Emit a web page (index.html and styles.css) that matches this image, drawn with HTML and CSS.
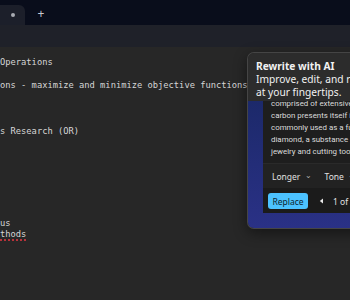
FILE: index.html
```html
<!DOCTYPE html>
<html lang="en">
<head>
  <meta charset="UTF-8" />
  <title>Notepad - Rewrite</title>
  <link rel="stylesheet" href="styles.css">
</head>
<body>
  <header class="tabbar">
    <div class="tab"><span class="dot"></span></div>
    <div class="newtab">+</div>
  </header>
  <div class="toolbar"></div>

  <main class="editor">
    <pre class="lines">Operations

ons - maximize and minimize objective functions



s Research (OR)







us
<span class="misspelled">thods</span></pre>

    <!-- rewrite popup sits over the text -->
    <div class="popup">
      <div class="popup-head">
        <div class="popup-title">Rewrite with AI</div>
        <div class="popup-desc">Improve, edit, and rewrite text<br>at your fingertips.</div>
      </div>
      <div class="popup-body">
        <div class="card">
          <div class="card-text">
            <p>comprised of extensive chains,</p>
            <p>carbon presents itself in a variety</p>
            <p>commonly used as a fuel source,</p>
            <p>diamond, a substance renowned for</p>
            <p>jewelry and cutting tools.</p>
          </div>
          <div class="options">
            <span class="opt">Longer <span class="chev">&#8964;</span></span>
            <span class="opt">Tone <span class="chev">&#8964;</span></span>
          </div>
          <div class="actions">
            <button class="replace">Replace</button>
            <svg class="prev" width="5" height="6" viewBox="0 0 5 6"><path d="M4 0.5 L0.8 3 L4 5.5 Z" fill="#e8e8e8"/></svg>
            <span class="count">1 of 4</span>
          </div>
        </div>
      </div>
    </div>
  </main>
</body>
</html>
```

FILE: styles.css
```css
body {
  margin: 0;
  width: 350px;
  height: 300px;
  overflow: hidden;
  background: #272727;
  font-family: "Noto Sans", sans-serif;
}
.tabbar {
  height: 25px;
  background: #090d1b;
  display: flex;
  align-items: flex-end;
}
.tab {
  width: 25px;
  height: 20px;
  background: #1c1f2a;
  border-top-right-radius: 6px;
  display: flex;
  align-items: center;
  justify-content: center;
}
.dot {
  width: 4px;
  height: 4px;
  border-radius: 50%;
  background: #a8abb2;
}
.newtab {
  width: 32px;
  height: 20px;
  line-height: 18px;
  text-align: center;
  color: #c8cad0;
  font-size: 12px;
}
.toolbar {
  height: 22px;
  background: #1f2129;
}
.editor {
  position: relative;
  padding-top: 10px;
}
.lines {
  margin: 0;
  font-family: "DejaVu Sans Mono", monospace;
  font-size: 8.75px;
  line-height: 11.47px;
  color: #d6d6d6;
}
.misspelled {
  text-decoration: underline dotted #b8323a;
  text-decoration-thickness: 2px;
  text-underline-offset: 2px;
}
.popup {
  position: absolute;
  left: 247px;
  top: 5px;
  width: 130px;
  border: 1px solid #454545;
  border-right: none;
  border-radius: 7px 0 0 7px;
  overflow: hidden;
  box-shadow: 0 4px 14px rgba(0,0,0,0.45);
}
.popup-head {
  background: #2c2c2c;
  padding: 7px 0 0 8px;
  height: 41px;
  color: #f2f2f2;
  font-size: 10.2px;
  line-height: 13px;
  white-space: nowrap;
}
.popup-title {
  font-weight: bold;
}
.popup-body {
  background: linear-gradient(180deg, #1c296a, #2a3186);
  padding: 0 0 15px 15px;
}
.card {
  background: #1e1e1e;
  height: 112px;
  overflow: hidden;
}
.card-text {
  height: 62px;
  padding-left: 8px;
  overflow: hidden;
  font-family: Roboto, sans-serif;
  font-size: 7.9px;
  line-height: 12px;
  color: #dcdcdc;
  white-space: nowrap;
}
.card-text p {
  margin: 0;
}
.card-text p:first-child {
  margin-top: -3px;
}
.options {
  height: 24px;
  border-top: 1px solid #2a2a2a;
  background: #222222;
  display: flex;
  align-items: center;
  gap: 13px;
  padding-left: 9px;
  font-size: 8.5px;
  color: #e0e0e0;
}
.chev {
  font-size: 8px;
  color: #b0b0b0;
  position: relative;
  top: -2px;
  margin-left: 2px;
}
.actions {
  height: 26px;
  background: #1b1b1b;
  display: flex;
  align-items: center;
  padding-left: 5px;
  font-size: 8.5px;
  color: #e0e0e0;
}
.replace {
  width: 40px;
  height: 16px;
  border: none;
  border-radius: 3px;
  background: #4cc2ff;
  color: #0b1f2e;
  font-family: "Noto Sans", sans-serif;
  font-size: 8.5px;
  padding: 0;
}
.prev {
  margin-left: 11px;
}
.count {
  margin-left: 9px;
}
```
